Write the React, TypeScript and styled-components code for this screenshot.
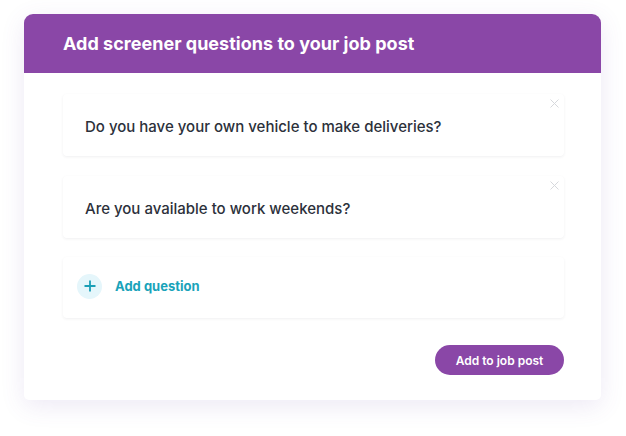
import React from 'react';
import styled, { createGlobalStyle } from 'styled-components';

const GlobalStyle = createGlobalStyle`
  html, body {
    margin: 0;
    padding: 0;
    background: #ffffff;
    font-family: Inter, "Noto Sans", sans-serif;
  }
`;

const questions = [
  'Do you have your own vehicle to make deliveries?',
  'Are you available to work weekends?',
];

const Page = styled.div`
  width: 626px;
  height: 436px;
  padding: 14px 25px 0 24px;
  box-sizing: border-box;
`;

const Card = styled.div`
  width: 577px;
  background: #ffffff;
  border-radius: 9px 9px 5px 5px;
  box-shadow: 0 6px 24px rgba(110, 70, 170, 0.12);
  overflow: hidden;
`;

const Header = styled.div`
  height: 59px;
  background: #8a47a7;
  display: flex;
  align-items: center;
  padding-left: 39px;
  color: #ffffff;
  font-size: 18px;
  font-weight: 700;
  letter-spacing: 0.02px;
`;

const Body = styled.div`
  padding: 21px 37px 25px 39px;
  display: flex;
  flex-direction: column;
`;

const QuestionList = styled.div`
  display: flex;
  flex-direction: column;
  gap: 20px;
`;

const QuestionCard = styled.div`
  position: relative;
  height: 62px;
  display: flex;
  align-items: center;
  padding: 2px 0 0 22px;
  box-sizing: border-box;
  border-radius: 4px;
  background: #ffffff;
  box-shadow: 0 1px 3px rgba(40, 40, 60, 0.07);
  font-size: 15px;
  font-weight: 500;
  color: #2c313b;
`;

const Close = styled.button`
  position: absolute;
  top: 2px;
  right: 3px;
  width: 14px;
  height: 14px;
  padding: 0;
  border: none;
  background: none;
  display: flex;
  align-items: center;
  justify-content: center;
`;

const AddRow = styled.div`
  margin-top: 19px;
  height: 61px;
  display: flex;
  align-items: center;
  gap: 13px;
  padding: 0 0 3px 14px;
  box-sizing: border-box;
  border-radius: 4px;
  box-shadow: 0 1px 3px rgba(40, 40, 60, 0.07);
`;

const PlusCircle = styled.span`
  width: 25px;
  height: 25px;
  border-radius: 50%;
  background: #e5f6fb;
  display: flex;
  align-items: center;
  justify-content: center;
`;

const AddLabel = styled.span`
  color: #19a3ba;
  font-size: 13px;
  font-weight: 700;
`;

const Footer = styled.div`
  margin-top: 27px;
  display: flex;
  justify-content: flex-end;
`;

const PrimaryButton = styled.button`
  height: 30px;
  width: 129px;
  border: none;
  border-radius: 15px;
  background: #8a47a7;
  color: #ffffff;
  font-family: inherit;
  font-size: 12px;
  font-weight: 600;
  cursor: pointer;
`;

const App: React.FC = () => {
  return (
    <>
      <GlobalStyle />
      <Page>
        <Card>
          <Header>Add screener questions to your job post</Header>
          <Body>
            <QuestionList>
              {questions.map((q) => (
                <QuestionCard key={q}>
                  {q}
                  <Close aria-label="Remove">
                    <svg width="9" height="9" viewBox="0 0 9 9">
                      <path d="M0.5 0.5L8.5 8.5M8.5 0.5L0.5 8.5" stroke="#d6d8dc" strokeWidth="1" />
                    </svg>
                  </Close>
                </QuestionCard>
              ))}
            </QuestionList>
            <AddRow>
              <PlusCircle>
                <svg width="12" height="12" viewBox="0 0 12 12">
                  <path d="M6 0.5V11.5M0.5 6H11.5" stroke="#1a9fb6" strokeWidth="1.8" />
                </svg>
              </PlusCircle>
              <AddLabel>Add question</AddLabel>
            </AddRow>
            <Footer>
              <PrimaryButton>Add to job post</PrimaryButton>
            </Footer>
          </Body>
        </Card>
      </Page>
    </>
  );
};

export default App;
